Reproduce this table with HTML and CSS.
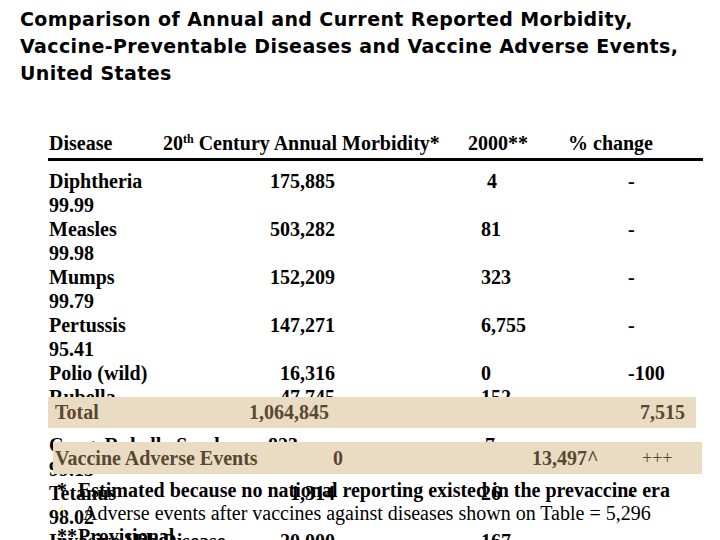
FILE: index.html
```html
<!DOCTYPE html>
<html>
<head>
<meta charset="utf-8">
<link rel="stylesheet" href="styles.css">
</head>
<body>
<div class="slide">
  <h1 class="title">Comparison of Annual and Current Reported Morbidity,<br>Vaccine-Preventable Diseases and Vaccine Adverse Events,<br>United States</h1>

  <div class="table">
    <div class="head">
      <span>Disease</span>
      <span>20<sup>th</sup> Century Annual Morbidity*</span>
      <span>2000**</span>
      <span>% change</span>
    </div>

    <div class="rows">
      <div class="row"><span class="name">Diphtheria</span><span class="num">175,885</span><span class="cur single">4</span><span class="pct">-</span></div>
      <div class="wrap">99.99</div>
      <div class="row"><span class="name">Measles</span><span class="num">503,282</span><span class="cur">81</span><span class="pct">-</span></div>
      <div class="wrap">99.98</div>
      <div class="row"><span class="name">Mumps</span><span class="num">152,209</span><span class="cur">323</span><span class="pct">-</span></div>
      <div class="wrap">99.79</div>
      <div class="row"><span class="name">Pertussis</span><span class="num">147,271</span><span class="cur">6,755</span><span class="pct">-</span></div>
      <div class="wrap">95.41</div>
      <div class="row"><span class="name">Polio (wild)</span><span class="num">16,316</span><span class="cur">0</span><span class="pct">-100</span></div>
      <div class="row"><span class="name">Rubella</span><span class="num">47,745</span><span class="cur">152</span><span class="pct">-</span></div>
      <div class="wrap">99.68</div>
      <div class="row"><span class="name">Cong. Rubella Synd.</span><span class="num shifted">823</span><span class="cur single-b">7</span><span class="pct">-</span></div>
      <div class="wrap">99.15</div>
      <div class="row"><span class="name">Tetanus</span><span class="num">1,314</span><span class="cur">26</span><span class="pct">-</span></div>
      <div class="wrap">98.02</div>
      <div class="row"><span class="name">Invasive Hib Disease</span><span class="num">20,000</span><span class="cur">167</span><span class="pct">-</span></div>
      <div class="wrap">99.17</div>
    </div>
  </div>

  <div class="band band-total">
    <span>Total</span>
    <span>1,064,845</span>
    <span></span>
    <span>7,515</span>
  </div>

  <div class="band band-vae">
    <span>Vaccine Adverse Events</span>
    <span>0</span>
    <span>13,497^</span>
    <span class="plus">+++</span>
  </div>

  <div class="notes">
    <p class="note bold"><span class="mark">*</span>Estimated because no national reporting existed in the prevaccine era</p>
    <p class="note"><span class="mark caret">^</span>Adverse events after vaccines against diseases shown on Table = 5,296</p>
    <p class="note bold"><span class="mark">**</span>Provisional</p>
  </div>
</div>
</body>
</html>
```

FILE: styles.css
```css
html, body {
  margin: 0;
  padding: 0;
  background: #ffffff;
}

.slide {
  position: relative;
  width: 720px;
  height: 540px;
  overflow: hidden;
  font-family: "Liberation Serif", "Times New Roman", serif;
  color: #000;
}

.title {
  margin: 0;
  padding: 6px 0 0 20px;
  font-family: Verdana, "DejaVu Sans", sans-serif;
  font-weight: bold;
  font-size: 19px;
  letter-spacing: 0.4px;
  line-height: 27px;
}

.table {
  margin: 44px 0 0 48px;
  width: 655px;
  font-weight: bold;
  font-size: 20px;
}

.head {
  display: grid;
  grid-template-columns: 114px 305px 100px auto;
  padding-left: 1px;
  line-height: 24px;
  height: 24px;
  border-bottom: 3px solid #000;
  padding-bottom: 3px;
}

.head sup {
  font-size: 12px;
  line-height: 0;
  vertical-align: 7px;
}

.rows {
  padding-top: 8px;
  line-height: 24px;
}

.row {
  display: grid;
  grid-template-columns: 160px 126px 146px 147px auto;
  padding-left: 1px;
  height: 24px;
}

.row .name { grid-column: 1; white-space: nowrap; }
.row .num { grid-column: 2; text-align: right; }
.row .cur { grid-column: 4; }
.row .pct { grid-column: 5; }
.row .shifted { padding-right: 37px; }
.row .single { padding-left: 6px; }
.row .single-b { padding-left: 4px; }

.wrap {
  padding-left: 1px;
  height: 24px;
}

.band {
  position: absolute;
  display: grid;
  align-items: center;
  background: #e9dcc3;
  color: #5a4732;
  font-weight: bold;
  font-size: 20px;
  box-sizing: border-box;
  white-space: nowrap;
}

.band-total {
  top: 397px;
  left: 48px;
  width: 648px;
  height: 31px;
  padding: 0 11px 0 7px;
  grid-template-columns: 194px 80px 1fr auto;
}

.band-vae {
  top: 442px;
  left: 53px;
  width: 649px;
  height: 32px;
  padding-left: 2px;
  grid-template-columns: 278px 199px 110px auto;
}

.band-vae .plus {
  font-weight: normal;
  font-size: 18px;
}

.notes {
  position: absolute;
  top: 478px;
  left: 49px;
  width: 671px;
}

.note {
  margin: 0;
  font-size: 20px;
  line-height: 24px;
  height: 23px;
  white-space: nowrap;
}

.note.bold { font-weight: bold; }

.mark {
  display: inline-block;
  width: 29px;
  padding-left: 8px;
  box-sizing: border-box;
}

.caret {
  width: 34px;
  color: #f5ef9a;
}
```
